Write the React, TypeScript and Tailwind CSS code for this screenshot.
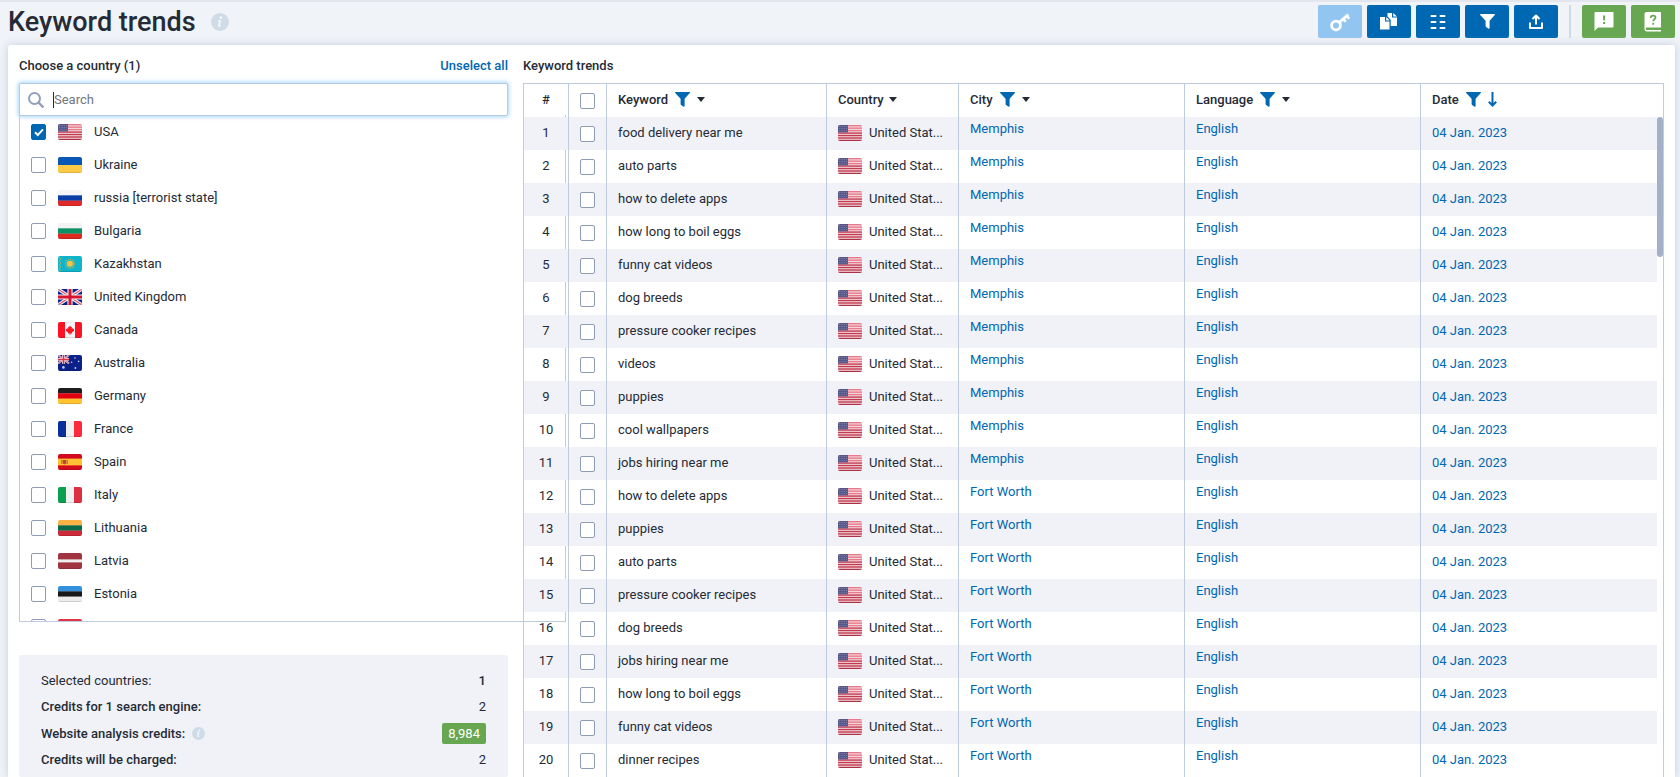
import React from "react";

type FlagCode =
  | "us" | "ua" | "ru" | "bg" | "kz" | "gb" | "ca" | "au"
  | "de" | "fr" | "es" | "it" | "lt" | "lv" | "ee" | "by";

const horizontal: Partial<Record<FlagCode, string[]>> = {
  ru: ["#f6f6f6", "#0a3da6", "#e02a2a"],
  bg: ["#f3f3f3", "#0c9163", "#dc2a20"],
  de: ["#1d1d1d", "#e0000f", "#ffc42f"],
  lt: ["#fdb245", "#0b6a47", "#cf2a3b"],
  ee: ["#3390dc", "#191919", "#ececec"],
};

const vertical: Partial<Record<FlagCode, string[]>> = {
  fr: ["#0a2e9c", "#f1f1f1", "#fc2b3c"],
  it: ["#0aa04f", "#f1f1f1", "#dd2f41"],
};

function FlagShape({ code }: { code: FlagCode }) {
  const h = horizontal[code];
  if (h) {
    return (
      <>
        <rect width="24" height="5.5" fill={h[0]} />
        <rect y="5.33" width="24" height="5.5" fill={h[1]} />
        <rect y="10.67" width="24" height="5.33" fill={h[2]} />
      </>
    );
  }
  const v = vertical[code];
  if (v) {
    return (
      <>
        <rect width="8" height="16" fill={v[0]} />
        <rect x="8" width="8" height="16" fill={v[1]} />
        <rect x="16" width="8" height="16" fill={v[2]} />
      </>
    );
  }
  switch (code) {
    case "us":
      return (
        <>
          <rect width="24" height="16" fill="#f3dfe1" />
          {[0, 1, 2, 3, 4, 5, 6].map((i) => (
            <rect key={i} y={i * 2.46} width="24" height="1.4" fill={i < 3 ? "#e8788a" : "#c23a50"} />
          ))}
          <rect width="10" height="7.4" fill="#56588a" />
          {[1.4, 3.6, 5.8].map((y) =>
            [1.4, 3.6, 5.8, 8].map((x) => <rect key={`${x}-${y}`} x={x} y={y - 0.4} width="0.8" height="0.8" fill="#9c9dbd" />)
          )}
        </>
      );
    case "ua":
      return (
        <>
          <rect width="24" height="8" fill="#0a57b5" />
          <rect y="8" width="24" height="8" fill="#ffcb47" />
        </>
      );
    case "kz":
      return (
        <>
          <rect width="24" height="16" fill="#10b4cb" />
          <path d="M1.2 1l1.6 2-1.6 2 1.6 2-1.6 2 1.6 2-1.6 2 1.6 2" fill="none" stroke="#a9b45c" strokeWidth="0.9" />
          <circle cx="12" cy="7.8" r="4.3" fill="none" stroke="#9fbf74" strokeWidth="1.6" strokeDasharray="0.9 0.9" />
          <circle cx="12" cy="7.8" r="3" fill="#fcc044" />
        </>
      );
    case "gb":
      return (
        <>
          <rect width="24" height="16" fill="#0b2088" />
          <path d="M0 0l24 16M24 0L0 16" stroke="#f2f2f6" strokeWidth="3.4" />
          <path d="M0 0l24 16M24 0L0 16" stroke="#e0566b" strokeWidth="1.1" />
          <path d="M12 0v16M0 8h24" stroke="#f6f6f8" strokeWidth="5.2" />
          <path d="M12 0v16M0 8h24" stroke="#d9142f" strokeWidth="3" />
        </>
      );
    case "ca":
      return (
        <>
          <rect width="24" height="16" fill="#f3f3f3" />
          <rect width="7" height="16" fill="#fb1423" />
          <rect x="17" width="7" height="16" fill="#fb1423" />
          <path d="M12 3.400l1 1.800 1-.5-.3 2.200 1-.9.3.9 1.200-.1-.5 1.400.6.5-2.400 1.900.2 1-1.800-.2.1 1.600h-.8l.1-1.600-1.800.2.2-1-2.400-1.900.6-.5-.5-1.400 1.200.1.3-.9 1 .9-.3-2.200 1 .5z" fill="#fb1423" />
        </>
      );
    case "au":
      return (
        <>
          <rect width="24" height="16" fill="#0b2088" />
          <path d="M0 0l11 8.5M11 0L0 8.5" stroke="#d9d5e6" strokeWidth="2" />
          <path d="M0 0l11 8.5M11 0L0 8.5" stroke="#e0566b" strokeWidth="0.8" />
          <path d="M5.5 0v9M0 4.4h11" stroke="#eee" strokeWidth="2.8" />
          <path d="M5.5 0v9M0 4.4h11" stroke="#e03148" strokeWidth="1.5" />
          <circle cx="5.4" cy="12.4" r="1.3" fill="#c8cdea" />
          <circle cx="17" cy="3" r="0.8" fill="#c8cdea" />
          <circle cx="13.6" cy="7.2" r="0.8" fill="#c8cdea" />
          <circle cx="20.6" cy="6.4" r="0.8" fill="#c8cdea" />
          <circle cx="17.4" cy="13" r="0.9" fill="#c8cdea" />
        </>
      );
    case "es":
      return (
        <>
          <rect width="24" height="16" fill="#d3091f" />
          <rect y="4.6" width="24" height="6.8" fill="#ffc034" />
          <path d="M3.4 6h1v4h-1zM8.6 6h1v4h-1zM5 6h3v3.4L6.5 10.4 5 9.4z" fill="#b5453a" />
        </>
      );
    case "lv":
      return (
        <>
          <rect width="24" height="16" fill="#a13441" />
          <rect y="6.4" width="24" height="3" fill="#f0eeee" />
        </>
      );
    default:
      return <rect width="24" height="16" fill="#e23246" />;
  }
}

function Flag({ code }: { code: FlagCode }) {
  return (
    <svg viewBox="0 0 24 16" className="h-4 w-6 shrink-0 overflow-hidden rounded-[2px]" aria-hidden="true">
      <FlagShape code={code} />
      <rect y="15" width="24" height="1" fill="#000" opacity="0.12" />
    </svg>
  );
}

function Check({ label, checked = false }: { label?: string; checked?: boolean }) {
  return (
    <input
      type="checkbox"
      aria-label={label}
      defaultChecked={checked}
      className="block h-4 w-[15px] shrink-0 appearance-none rounded-[2px] border border-[#8f9cb8] bg-white bg-center bg-no-repeat checked:border-[#0067b3] checked:bg-[#0067b3] checked:bg-[url('data:image/svg+xml,%3Csvg%20xmlns=%22http://www.w3.org/2000/svg%22%20width=%2212%22%20height=%2212%22%20fill=%22none%22%20stroke=%22white%22%20stroke-width=%222%22%3E%3Cpath%20d=%22M2%206.2L4.8%209L10%203.4%22/%3E%3C/svg%3E')]"
    />
  );
}

function Info({ className }: { className: string }) {
  return (
    <svg viewBox="0 0 18 18" className={className} aria-hidden="true">
      <circle cx="9" cy="9" r="9" fill="#d0dbe8" />
      <circle cx="9.9" cy="4.7" r="1.4" fill="#f6f9fc" />
      <path d="M6.9 7.3h3.4l-1.4 5.2h1.3l-.3 1.1H6.800l1.4-5.2H6.600z" fill="#f6f9fc" />
    </svg>
  );
}

const funnelPath =
  "M.6 0h13.8c.6 0 .8.7.4 1.1L9.6 6.8V14c0 .7-.8 1-1.3.6l-2.200-1.700c-.3-.2-.5-.5-.5-.9V6.800L.2 1.100C-.2.7 0 0 .6 0z";

function Funnel({ color = "#0067b3" }: { color?: string }) {
  return (
    <svg viewBox="0 0 15 15" className="h-[15px] w-[15px] shrink-0" fill={color} aria-hidden="true">
      <path d={funnelPath} />
    </svg>
  );
}

function Caret() {
  return (
    <svg viewBox="0 0 8 5" className="h-[5px] w-2 shrink-0" fill="#252b36" aria-hidden="true">
      <path d="M0 0h8L4 5z" />
    </svg>
  );
}

const countries: { name: string; code: FlagCode }[] = [
  { name: "USA", code: "us" },
  { name: "Ukraine", code: "ua" },
  { name: "russia [terrorist state]", code: "ru" },
  { name: "Bulgaria", code: "bg" },
  { name: "Kazakhstan", code: "kz" },
  { name: "United Kingdom", code: "gb" },
  { name: "Canada", code: "ca" },
  { name: "Australia", code: "au" },
  { name: "Germany", code: "de" },
  { name: "France", code: "fr" },
  { name: "Spain", code: "es" },
  { name: "Italy", code: "it" },
  { name: "Lithuania", code: "lt" },
  { name: "Latvia", code: "lv" },
  { name: "Estonia", code: "ee" },
  { name: "Belarus", code: "by" },
];

const keywords = [
  "food delivery near me", "auto parts", "how to delete apps", "how long to boil eggs",
  "funny cat videos", "dog breeds", "pressure cooker recipes", "videos", "puppies",
  "cool wallpapers", "jobs hiring near me", "how to delete apps", "puppies", "auto parts",
  "pressure cooker recipes", "dog breeds", "jobs hiring near me", "how long to boil eggs",
  "funny cat videos", "dinner recipes",
];

const tool = "flex h-[33px] w-11 items-center justify-center rounded-[2px] text-white";

function Toolbar() {
  return (
    <div className="flex items-center gap-[5px]">
      <button aria-label="Key" className={`${tool} bg-[#92c5f0]`}>
        <svg viewBox="0 0 20 20" className="h-5 w-5" fill="none" stroke="currentColor" aria-hidden="true">
          <circle cx="6" cy="13.5" r="4.4" strokeWidth="2.8" />
          <path d="M9.300 10.300L18.300 2.600" strokeWidth="3" />
          <path d="M13 6.500l2.700 3.300M16.500 3.500l2.700 3.300" strokeWidth="2.600" />
        </svg>
      </button>
      <button aria-label="Copy" className={`${tool} bg-[#0067b3]`}>
        <svg viewBox="0 0 18 17" className="h-[17px] w-[18px]" fill="currentColor" aria-hidden="true">
          <path d="M0 4h5v4.500h4.500V16.500H0zM6.200 4l3.500 3.500H6.200z" />
          <path d="M7.500 0h4.500v4.500H17V13h-6.300V6.800L7.500 3.600zM13.200 0L17 3.500h-3.800z" />
        </svg>
      </button>
      <button aria-label="Columns" className={`${tool} bg-[#0067b3]`}>
        <svg viewBox="0 0 16 14" className="h-[14px] w-4" fill="none" stroke="currentColor" strokeWidth="2" strokeLinecap="round" aria-hidden="true">
          <path d="M1.500 1h4M10.500 1h4M1.500 7h4M10.500 7h4M1.500 13h4M10.500 13h4" />
        </svg>
      </button>
      <button aria-label="Filter" className={`${tool} bg-[#0067b3]`}>
        <Funnel color="#fff" />
      </button>
      <button aria-label="Export" className={`${tool} bg-[#0067b3]`}>
        <svg viewBox="0 0 14 15" className="h-[15px] w-[14px]" fill="none" stroke="currentColor" strokeWidth="2" aria-hidden="true">
          <path d="M7 10.500V2.500M3.500 5L7 1.500 10.500 5M1 8.500V14h12V8.500" strokeLinejoin="round" />
        </svg>
      </button>
      <span className="mx-1.5 h-[33px] w-0.5 bg-[#cfd9e7]" />
      <button aria-label="Feedback" className={`${tool} bg-[#68a751]`}>
        <svg viewBox="0 0 20 20" className="h-5 w-5" fill="currentColor" aria-hidden="true">
          <path fillRule="evenodd" d="M1.500 0h17c.8 0 1 .4 1 1v13.500c0 .6-.4 1-1 1H4L.5 19V1c0-.6.400-1 1-1zM9 3.500l.3 5h1.600l.3-5zM9.100 10v2h2v-2z" />
        </svg>
      </button>
      <button aria-label="Help" className={`${tool} bg-[#68a751]`}>
        <svg viewBox="0 0 18 20" className="h-5 w-[18px]" aria-hidden="true">
          <path d="M2.500 0H16c.6 0 1 .4 1 1v14.500H3c-.8 0-1.300.4-1.300 1.200S2.200 18 3 18h14v1.500H3C1.200 19.500.5 18.200.5 16.500V2c0-1.200.8-2 2-2z" fill="#fff" />
          <path d="M6.700 6c0-3.200 4.800-2.800 4.800-.4 0 1.800-2.300 1.700-2.300 3.700M9.200 10.800v2" stroke="#68a751" strokeWidth="1.800" fill="none" />
        </svg>
      </button>
    </div>
  );
}

function CountryPicker() {
  return (
    <div className="relative z-0 h-[538px]">
      <label className="relative z-10 flex h-[33px] items-center gap-2 rounded-[2px] border border-[#b4cbe3] bg-white px-2 shadow-[0_0_4px_1px_#a6d6fb]">
        <svg viewBox="0 0 16 16" className="h-4 w-4 shrink-0" fill="none" stroke="#929fbb" strokeWidth="2" aria-hidden="true">
          <circle cx="6.500" cy="6.500" r="5.500" />
          <path d="M10.500 10.500l5 5" strokeWidth="2.400" />
        </svg>
        <span className="ml-px h-4 w-px bg-[#252b36]" />
        <input
          aria-label="Search"
          placeholder="Search"
          className="-ml-2 min-w-0 flex-1 bg-transparent outline-none placeholder:text-[#737780]"
        />
      </label>
      <ul className="absolute -right-[58px] left-0 top-8 h-[507px] overflow-hidden border-x border-b border-[#bfcbdf] bg-white">
        {countries.map((c) => (
          <li key={c.name}>
            <label className="flex h-[33px] items-center px-[11px]">
              <Check checked={c.code === "us"} />
              <span className="ml-3">
                <Flag code={c.code} />
              </span>
              <span className="ml-3">{c.name}</span>
            </label>
          </li>
        ))}
      </ul>
    </div>
  );
}

function Summary() {
  return (
    <dl className="mt-[34px] flex flex-1 flex-col rounded-[2px] bg-[#f0f2f7] px-[22px] pt-[13px]">
      <div className="flex h-[26px] items-center justify-between">
        <dt>Selected countries:</dt>
        <dd className="font-medium">1</dd>
      </div>
      <div className="flex h-[26px] items-center justify-between">
        <dt className="font-medium">Credits for 1 search engine:</dt>
        <dd>2</dd>
      </div>
      <div className="flex h-[27px] items-center justify-between">
        <dt className="flex items-center gap-[7px] font-medium">
          Website analysis credits:
          <Info className="h-[13px] w-[13px]" />
        </dt>
        <dd className="rounded-[2px] bg-[#68a751] px-1.5 leading-[21px] text-white">8,984</dd>
      </div>
      <div className="flex h-[26px] items-center justify-between">
        <dt className="font-medium">Credits will be charged:</dt>
        <dd>2</dd>
      </div>
    </dl>
  );
}

const edge = "border-l border-[#bfcbdf]";
const th = "border-l border-[#bfcbdf] pb-0.5 pl-[11px] text-left font-medium";
const td = "border-l border-[#bfcbdf] pb-0.5 pl-[11px]";
const raised = "border-l border-[#bfcbdf] pb-2.5 pl-[11px]";
const link = "text-[#0067b3]";

function TrendsTable() {
  return (
    <div className="relative z-10 flex-1 border-r border-t border-[#bfcbdf]">
      <table className="w-full table-fixed border-separate border-spacing-0">
        <colgroup>
          <col className="w-[45px]" />
          <col className="w-[38px]" />
          <col className="w-[220px]" />
          <col className="w-[132px]" />
          <col className="w-[226px]" />
          <col className="w-[236px]" />
          <col />
        </colgroup>
        <thead>
          <tr className="h-[33px]">
            <th className={`${edge} pb-0.5 text-center font-medium`}>#</th>
            <th className={`${edge} pl-[11px]`}><Check label="Select all" /></th>
            <th className={th}>
              <span className="flex items-center gap-[7px]">Keyword <Funnel /><Caret /></span>
            </th>
            <th className={th}>
              <span className="flex items-center gap-[5px]">Country <Caret /></span>
            </th>
            <th className={th}>
              <span className="flex items-center gap-[7px]">City <Funnel /><Caret /></span>
            </th>
            <th className={th}>
              <span className="flex items-center gap-[7px]">Language <Funnel /><Caret /></span>
            </th>
            <th className={th}>
              <span className="flex items-center gap-[7px]">
                Date <Funnel />
                <svg viewBox="0 0 9 15" className="h-[15px] w-[9px]" fill="none" stroke="#0067b3" strokeWidth="2" aria-hidden="true">
                  <path d="M4.500 0v13.500M.8 9.800l3.700 3.700 3.700-3.700" />
                </svg>
              </span>
            </th>
          </tr>
        </thead>
        <tbody>
          {keywords.map((k, i) => (
            <tr key={i} className="h-[33px] odd:bg-[#f0f2f7]">
              <td className={`${edge} pb-0.5 text-center`}>{i + 1}</td>
              <td className={`${edge} pl-[11px]`}><Check label={`Select ${k}`} /></td>
              <td className={td}>{k}</td>
              <td className={td}>
                <span className="flex items-center gap-[7px] whitespace-nowrap">
                  <Flag code="us" />
                  <span>United Stat...</span>
                </span>
              </td>
              <td className={raised}><a href="#city" className={link}>{i < 11 ? "Memphis" : "Fort Worth"}</a></td>
              <td className={raised}><a href="#language" className={link}>English</a></td>
              <td className={td}><a href="#date" className={link}>04 Jan. 2023</a></td>
            </tr>
          ))}
        </tbody>
      </table>
      <div className="absolute bottom-0 right-0 top-[33px] w-1.5 bg-white">
        <div className="h-[140px] rounded-[3px] bg-[#a2b0c8]" />
      </div>
    </div>
  );
}

export default function App() {
  return (
    <div className="flex h-screen flex-col overflow-hidden border-t-2 border-[#e3e7ed] bg-[#f0f3f8] font-[Roboto,sans-serif] text-[13px] leading-5 text-[#252b36]">
      <header className="flex h-[43px] shrink-0 items-start justify-between pl-2 pr-[5px] pt-[3px]">
        <h1 className="flex items-center gap-[15px] text-[27px] font-medium leading-[34px]">
          Keyword trends
          <Info className="h-[18px] w-[18px]" />
        </h1>
        <Toolbar />
      </header>
      <main className="ml-2 mr-[5px] flex flex-1 gap-[15px] rounded-t-[3px] bg-white pl-[11px] pr-[11px] pt-[11px] shadow-[0_0_8px_#c3cedd]">
        <section className="flex w-[489px] shrink-0 flex-col">
          <div className="mb-[7px] flex h-5 justify-between font-medium">
            <h2>Choose a country (1)</h2>
            <a href="#unselect" className={link}>Unselect all</a>
          </div>
          <CountryPicker />
          <Summary />
        </section>
        <section className="flex min-w-0 flex-1 flex-col">
          <h2 className="mb-[7px] h-5 font-medium">Keyword trends</h2>
          <TrendsTable />
        </section>
      </main>
    </div>
  );
}
